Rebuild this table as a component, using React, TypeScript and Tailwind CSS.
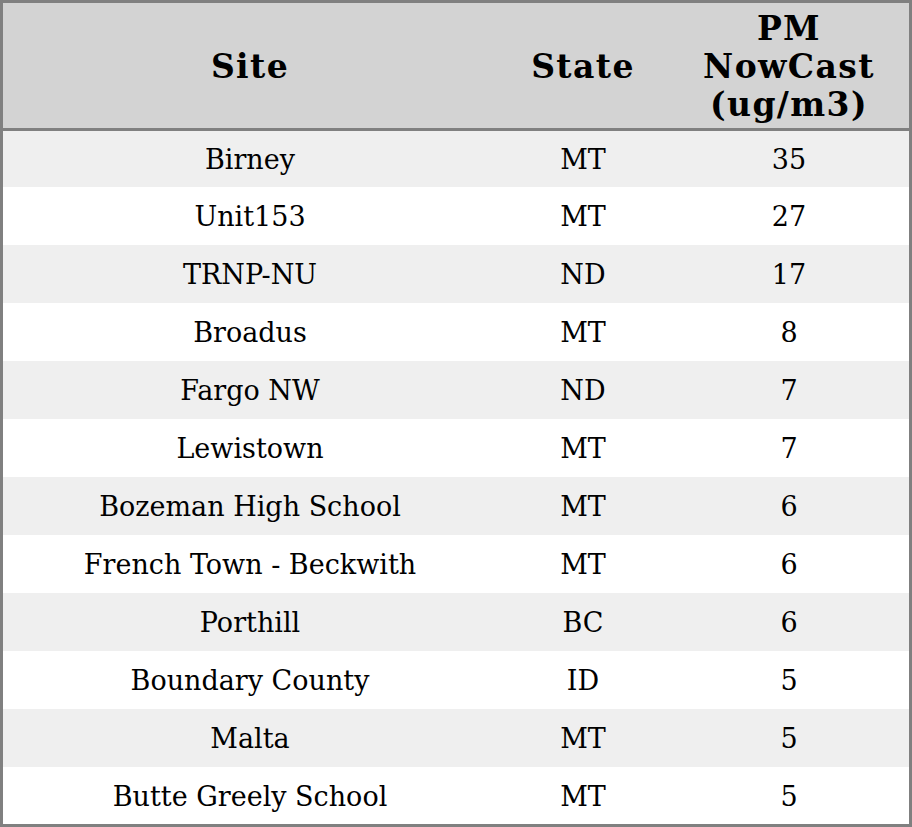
const rows: [string, string, string][] = [
  ['Birney', 'MT', '35'],
  ['Unit153', 'MT', '27'],
  ['TRNP-NU', 'ND', '17'],
  ['Broadus', 'MT', '8'],
  ['Fargo NW', 'ND', '7'],
  ['Lewistown', 'MT', '7'],
  ['Bozeman High School', 'MT', '6'],
  ['French Town - Beckwith', 'MT', '6'],
  ['Porthill', 'BC', '6'],
  ['Boundary County', 'ID', '5'],
  ['Malta', 'MT', '5'],
  ['Butte Greely School', 'MT', '5'],
]

export default function App() {
  return (
    <div
      className="w-[912px] h-[827px] bg-white border-[3px] border-[#808080] text-black"
      style={{ fontFamily: '"DejaVu Serif", serif' }}
    >
      <div className="grid grid-cols-[494px_172px_240px] h-[128px] pt-[2px] bg-[#d3d3d3] border-b-[3px] border-[#808080] text-[33px] font-bold leading-[38px] tracking-[1.4px] text-center">
        <div className="flex items-center justify-center">Site</div>
        <div className="flex items-center justify-center">State</div>
        <div className="flex items-center justify-center">
          PM
          <br />
          NowCast
          <br />
          (ug/m3)
        </div>
      </div>
      {rows.map(([site, state, pm], i) => (
        <div
          key={site}
          className={`grid grid-cols-[494px_172px_240px] pt-[3px] text-[27px] text-center ${
            i % 2 === 0 ? 'bg-[#efefef]' : 'bg-white'
          } ${i === 0 ? 'h-[56px]' : i === rows.length - 1 ? 'h-[57px]' : 'h-[58px]'}`}
        >
          <div className="flex items-center justify-center">{site}</div>
          <div className="flex items-center justify-center">{state}</div>
          <div className="flex items-center justify-center">{pm}</div>
        </div>
      ))}
    </div>
  )
}
